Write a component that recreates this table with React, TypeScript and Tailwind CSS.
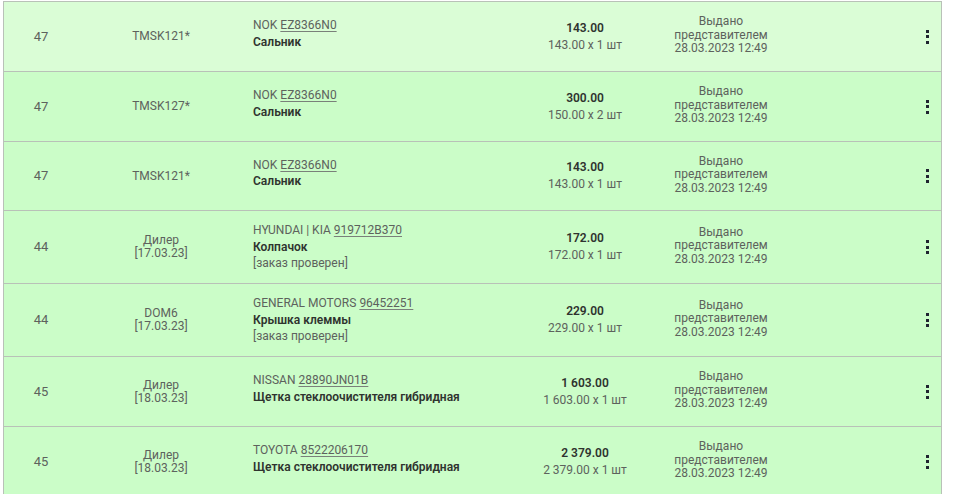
type Row = {
  num: string;
  src: string[];
  brand: string;
  part: string;
  name: string;
  note?: string;
  total: string;
  calc: string;
  light?: boolean;
  h: string;
};

const rows: Row[] = [
  { num: "47", src: ["TMSK121*"], brand: "NOK", part: "EZ8366N0", name: "Сальник", total: "143.00", calc: "143.00 x 1 шт", light: true, h: "h-[70px]" },
  { num: "47", src: ["TMSK127*"], brand: "NOK", part: "EZ8366N0", name: "Сальник", total: "300.00", calc: "150.00 x 2 шт", h: "h-[70px]" },
  { num: "47", src: ["TMSK121*"], brand: "NOK", part: "EZ8366N0", name: "Сальник", total: "143.00", calc: "143.00 x 1 шт", h: "h-[69px]" },
  { num: "44", src: ["Дилер", "[17.03.23]"], brand: "HYUNDAI | KIA", part: "919712B370", name: "Колпачок", note: "[заказ проверен]", total: "172.00", calc: "172.00 x 1 шт", h: "h-[73px]" },
  { num: "44", src: ["DOM6", "[17.03.23]"], brand: "GENERAL MOTORS", part: "96452251", name: "Крышка клеммы", note: "[заказ проверен]", total: "229.00", calc: "229.00 x 1 шт", h: "h-[73px]" },
  { num: "45", src: ["Дилер", "[18.03.23]"], brand: "NISSAN", part: "28890JN01B", name: "Щетка стеклоочистителя гибридная", total: "1 603.00", calc: "1 603.00 x 1 шт", h: "h-[70px]" },
  { num: "45", src: ["Дилер", "[18.03.23]"], brand: "TOYOTA", part: "8522206170", name: "Щетка стеклоочистителя гибридная", total: "2 379.00", calc: "2 379.00 x 1 шт", h: "h-[70px]" },
];

function Dots() {
  return (
    <div className="flex flex-col gap-[2.5px]">
      <span className="block h-[3px] w-[3px] bg-[#1f2430]" />
      <span className="block h-[3px] w-[3px] bg-[#1f2430]" />
      <span className="block h-[3px] w-[3px] bg-[#1f2430]" />
    </div>
  );
}

export default function App() {
  return (
    <div className="h-[494px] w-[960px] overflow-hidden bg-white pl-[3px] pt-[1px] font-['Roboto',_'Liberation_Sans',_sans-serif] text-[12px] text-[#5d625d]">
      <div className="w-[939px] border-x border-t border-[#b9c1b8]">
        {rows.map((r, i) => (
          <div
            key={i}
            className={`grid grid-cols-[74px_166px_275px_132px_140px_1fr] items-center border-b border-[#b9c1b8] ${r.h} ${
              r.light ? "bg-[#dafdd6]" : "bg-[#cbfdc8]"
            }`}
          >
            <div className="text-center text-[13px]">{r.num}</div>
            <div className="flex flex-col items-center text-[12px] leading-[13px]">
              {r.src.map((s, j) => (
                <span key={j}>{s}</span>
              ))}
            </div>
            <div className={`flex flex-col pl-[9px] leading-[16.5px] ${r.note ? "" : "mb-[6px]"}`}>
              <span>
                {r.brand}{" "}
                <span className="underline decoration-[#7a807a] underline-offset-2">{r.part}</span>
              </span>
              <span className="font-semibold text-[#2f332f]">{r.name}</span>
              {r.note && <span>{r.note}</span>}
            </div>
            <div className="flex flex-col items-center leading-[17px]">
              <span className="font-semibold text-[#2f332f]">{r.total}</span>
              <span>{r.calc}</span>
            </div>
            <div className="mb-[2px] flex flex-col items-center leading-[13.5px]">
              <span>Выдано</span>
              <span>представителем</span>
              <span>28.03.2023 12:49</span>
            </div>
            <div className="flex justify-end pr-[12px]">
              <Dots />
            </div>
          </div>
        ))}
      </div>
    </div>
  );
}
